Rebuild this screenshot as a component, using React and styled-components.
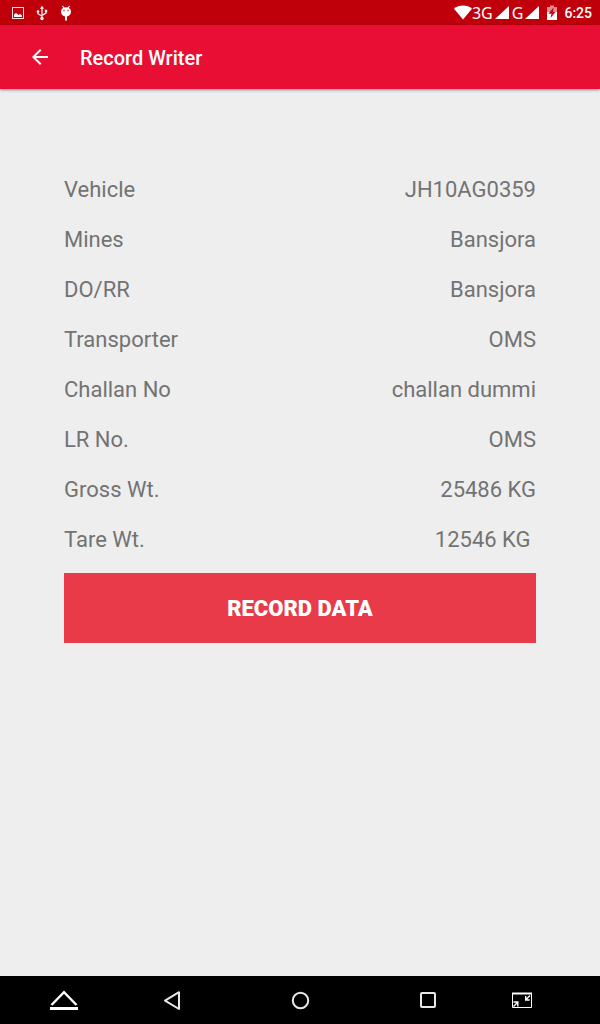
import styled, { createGlobalStyle } from 'styled-components';

/* ── Styled Components ───────────────────────────────────────── */
const GlobalStyle = createGlobalStyle`
  *{box-sizing:border-box;}
  body{margin:0;background:#eee;font-family:Roboto,"Liberation Sans",sans-serif;}
`;
const Screen = styled.div`display:flex;flex-direction:column;min-height:100vh;background:#eee;`;

const StatusBar = styled.div`
  display:flex;justify-content:space-between;align-items:center;
  height:25px;padding:0 8px 0 10px;background:#bf000b;color:#fff;
`;
const Notifications = styled.div`display:flex;align-items:center;gap:8px;`;
const Indicators = styled.div`display:flex;align-items:center;`;
const Network = styled.span`
  display:flex;align-items:center;gap:2px;margin-right:${p => p.$gap || 0}px;
  font-family:"Noto Sans","Open Sans",sans-serif;font-size:16px;line-height:22px;
`;
const Clock = styled.time`margin-left:6px;font-size:14px;font-weight:500;line-height:24px;`;

const AppBar = styled.header`
  display:flex;align-items:center;gap:28px;height:64px;padding:0 28px;
  background:#e90e34;color:#fff;box-shadow:0 1px 3px rgba(0,0,0,0.4);
`;
const BackButton = styled.button`
  display:flex;padding:0;border:0;background:none;color:inherit;cursor:pointer;
`;
const Title = styled.h1`margin:0;padding-top:2px;font-size:20px;font-weight:500;line-height:24px;`;

const Content = styled.main`flex:1;padding:75px 64px 32px;`;
const Details = styled.dl`margin:0 0 9px;`;
const Row = styled.div`
  display:flex;justify-content:space-between;padding:13px 0 11px;
  font-size:22px;line-height:26px;color:#737373;
`;
const Label = styled.dt`margin:0;`;
const Value = styled.dd`margin:0;white-space:pre;`;
const RecordButton = styled.button`
  display:block;width:100%;padding:23px 16px 21px;border:0;background:#e83a48;color:#fff;
  font-family:inherit;font-size:22px;font-weight:900;line-height:26px;text-transform:uppercase;cursor:pointer;
`;

const NavBar = styled.nav`
  display:grid;grid-template-columns:108fr 128fr 128fr 128fr 108fr;height:48px;background:#000;
`;
const NavButton = styled.button`
  display:flex;align-items:center;justify-content:${p => p.$align || 'center'};
  padding:${p => p.$pad || '0'};border:0;background:none;color:#fff;cursor:pointer;
`;

/* ── Icons ───────────────────────────────────────────────────── */
const PictureIcon = () => (
    <svg width="16" height="16" viewBox="0 0 16 16" aria-hidden="true">
        <rect x="2.5" y="2.5" width="11" height="11" fill="none" stroke="#fbdede" />
        <path d="M4 12V9.500l2-1.500 2.500 2L10 9l2 1.500V12z" fill="#fff" />
    </svg>
);
const UsbIcon = () => (
    <svg width="16" height="16" viewBox="0 0 16 16" fill="none" stroke="#fbe4e4" strokeWidth="1.300" aria-hidden="true">
        <path d="M8 3v10M4 6.500v2.200L8 11.300M12 6v2.200L8 10.300" />
        <path d="M8 .8 10 3.800H6z" fill="#fff" stroke="none" />
        <circle cx="8" cy="13.500" r="1.700" fill="#fff" stroke="none" />
        <circle cx="4" cy="6.500" r="1.300" fill="#fff" stroke="none" />
        <path d="M10.800 4.800h2.400v2.400h-2.400z" fill="#fff" stroke="none" />
    </svg>
);
const DebugIcon = () => (
    <svg width="16" height="16" viewBox="0 0 16 16" aria-hidden="true">
        <path d="M4.500 1 6 3M11.500 1 10 3" stroke="#fff" strokeWidth="1.200" />
        <path d="M3 6.500C3 4 5 2.300 8 2.300s5 1.700 5 4.200C13 9 11.500 11 9 11.500v4H7v-4C4.500 11 3 9 3 6.500z" fill="#fff" />
        <circle cx="6" cy="5.500" r=".9" fill="#d8656b" />
        <circle cx="10" cy="5.500" r=".9" fill="#d8656b" />
    </svg>
);
const WifiIcon = () => (
    <svg width="18" height="16" viewBox="0 0 18 16" aria-hidden="true">
        <path d="M9 14.500 0 3.700C2.500 1.700 5.500.5 9 .5s6.500 1.200 9 3.200z" fill="#fff" />
    </svg>
);
const SignalIcon = () => (
    <svg width="14" height="14" viewBox="0 0 14 14" aria-hidden="true">
        <path d="M14 0v13H0z" fill="#fff" />
    </svg>
);
const BatteryIcon = () => (
    <svg width="12" height="16" viewBox="0 0 12 16" aria-hidden="true">
        <path d="M4 .5h4V2h3v5H1V2h3z" fill="#e58a8e" />
        <path d="M1 7h10v8H1z" fill="#fff" />
        <path d="M7.500 2.500 2.500 8.800h3L4.500 13l5-6H7z" fill="#bf000b" />
    </svg>
);
const BackIcon = () => (
    <svg width="24" height="24" viewBox="0 0 24 24" fill="currentColor" aria-hidden="true">
        <path d="M20 11H7.830l5.590-5.590L12 4l-8 8 8 8 1.410-1.410L7.830 13H20z" />
    </svg>
);
const EjectIcon = () => (
    <svg width="28" height="24" viewBox="0 0 28 24" fill="none" stroke="#fff" aria-hidden="true">
        <path d="M1.500 17 14 4.200 26.500 17" strokeWidth="2.400" />
        <path d="M0 20.500h28" strokeWidth="3" />
    </svg>
);
const NavBackIcon = () => (
    <svg width="20" height="20" viewBox="0 0 20 20" fill="none" stroke="#e8e8e8" strokeWidth="2" strokeLinejoin="round" aria-hidden="true">
        <path d="M17 2.200v16.800L3 10.600z" />
    </svg>
);
const HomeIcon = () => (
    <svg width="20" height="20" viewBox="0 0 20 20" fill="none" stroke="#e8e8e8" strokeWidth="2" aria-hidden="true">
        <circle cx="10.500" cy="10.500" r="7.700" />
    </svg>
);
const RecentIcon = () => (
    <svg width="20" height="20" viewBox="0 0 20 20" fill="none" stroke="#e8e8e8" strokeWidth="2" aria-hidden="true">
        <rect x="3" y="3" width="14" height="14" rx="1" />
    </svg>
);
const ShrinkIcon = () => (
    <svg width="20" height="16" viewBox="0 0 20 16" fill="none" stroke="#fff" aria-hidden="true">
        <path d="M0 1.500h20" strokeWidth="2" />
        <path d="M.5 1v14.500h19V1" />
        <path d="M18 3.500l-4 4M13.700 4v4h4" strokeWidth="1.400" />
        <path d="M1.500 14.500l4-4M1.500 10h4.300v4.500" strokeWidth="1.400" />
    </svg>
);

const DETAILS = [
    { label: 'Vehicle', value: 'JH10AG0359' },
    { label: 'Mines', value: 'Bansjora' },
    { label: 'DO/RR', value: 'Bansjora' },
    { label: 'Transporter', value: 'OMS' },
    { label: 'Challan No', value: 'challan dummi' },
    { label: 'LR No.', value: 'OMS' },
    { label: 'Gross Wt.', value: '25486 KG' },
    { label: 'Tare Wt.', value: '12546 KG ' },
];

/* ── Component ───────────────────────────────────────────────── */
export default function App() {
    return (
        <Screen>
            <GlobalStyle />
            <StatusBar>
                <Notifications><PictureIcon /><UsbIcon /><DebugIcon /></Notifications>
                <Indicators>
                    <WifiIcon />
                    <Network $gap={3}>3G<SignalIcon /></Network>
                    <Network $gap={7}>G<SignalIcon /></Network>
                    <BatteryIcon />
                    <Clock>6:25</Clock>
                </Indicators>
            </StatusBar>
            <AppBar>
                <BackButton type="button" aria-label="Back"><BackIcon /></BackButton>
                <Title>Record Writer</Title>
            </AppBar>
            <Content>
                <Details>
                    {DETAILS.map(d => (
                        <Row key={d.label}><Label>{d.label}</Label><Value>{d.value}</Value></Row>
                    ))}
                </Details>
                <RecordButton type="button">Record Data</RecordButton>
            </Content>
            <NavBar aria-label="System">
                <NavButton type="button" aria-label="Eject" $align="flex-end" $pad="0 30px 0 0"><EjectIcon /></NavButton>
                <NavButton type="button" aria-label="Back"><NavBackIcon /></NavButton>
                <NavButton type="button" aria-label="Home"><HomeIcon /></NavButton>
                <NavButton type="button" aria-label="Recent apps"><RecentIcon /></NavButton>
                <NavButton type="button" aria-label="Shrink" $align="flex-start" $pad="0 0 0 20px"><ShrinkIcon /></NavButton>
            </NavBar>
        </Screen>
    );
}
